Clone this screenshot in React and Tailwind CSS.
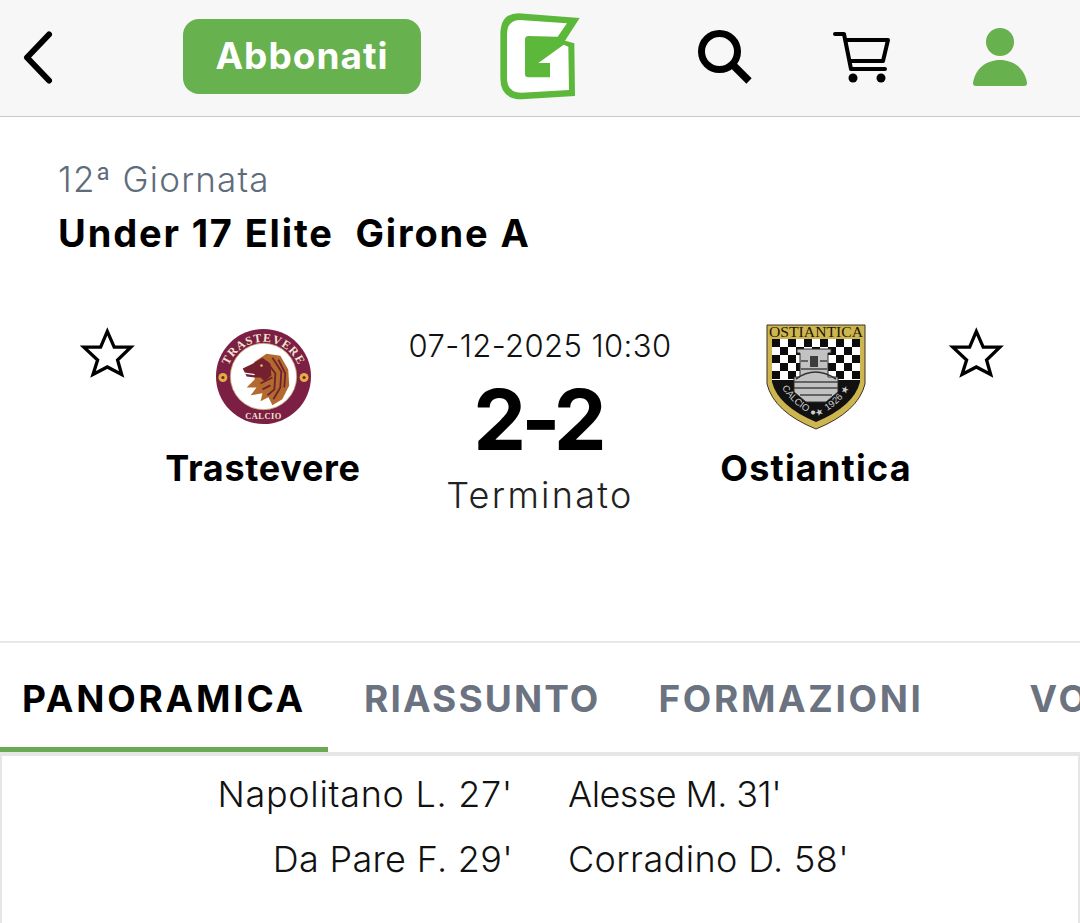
import React from 'react';

const BackIcon = () => (
  <svg width="34" height="56" viewBox="0 0 34 56" fill="none">
    <path d="M28 5.5 L6 28.5 L28 51.5" stroke="#000" strokeWidth="6" strokeLinecap="round" strokeLinejoin="round" />
  </svg>
);

const Logo = () => (
  <svg width="90" height="95" viewBox="0 0 270 285">
    <path d="M70 16 L254 30 L210 98 L238 106 L240 264 L80 274 Q16 274 16 210 L16 80 Q16 16 70 16 Z" fill="#5cb83a" />
    <path d="M74 36 L216 46 L188 86 L100 84 Q90 84 90 96 L90 198 Q90 208 100 208 L165 208 L165 165 L130 165 L206 110 L220 116 L222 246 L80 254 Q36 254 36 210 L36 80 Q36 36 74 36 Z" fill="#fff" />
  </svg>
);

const SearchIcon = () => (
  <svg width="56" height="56" viewBox="0 0 56 56" fill="none">
    <circle cx="22.5" cy="22.5" r="18" stroke="#000" strokeWidth="7" />
    <path d="M36 36 L52 52" stroke="#000" strokeWidth="7.5" />
  </svg>
);

const CartIcon = () => (
  <svg width="58" height="52" viewBox="0 0 58 52" fill="none">
    <path d="M2 2 H11 L18 37 H52" stroke="#000" strokeWidth="4" strokeLinecap="round" strokeLinejoin="round" />
    <path d="M12 8 H55 L50 29 H16" stroke="#000" strokeWidth="4" strokeLinejoin="round" />
    <circle cx="20" cy="46" r="4.5" fill="#000" />
    <circle cx="48" cy="46" r="4.5" fill="#000" />
  </svg>
);

const UserIcon = () => (
  <svg width="56" height="60" viewBox="0 0 56 60">
    <circle cx="28" cy="15" r="14" fill="#68b14f" />
    <path d="M1 56 C3 42 14 33 28 33 C42 33 53 42 55 56 Q55 59 52 59 H4 Q1 59 1 56 Z" fill="#68b14f" />
  </svg>
);

const StarIcon = () => (
  <svg width="65" height="65" viewBox="-3 -3 71 71" fill="none">
    <path d="M32.3 9.5 L39.8 26.7 L58 26.7 L43.5 40.7 L48 56.5 L32.3 48.3 L16.7 56.5 L21.7 40.7 L6.7 26.7 L25 26.7 Z" stroke="#000" strokeWidth="3.6" />
  </svg>
);

const TrastevereCrest = () => (
  <svg width="97" height="97" viewBox="0 0 98 98">
    <defs>
      <path id="topArc" d="M11 52 A38 38 0 0 1 87 52" />
    </defs>
    <circle cx="49" cy="49" r="48" fill="#7b1f45" />
    <circle cx="49" cy="49" r="33.5" fill="#fff" stroke="#c9a06a" strokeWidth="0.8" />
    <text fontFamily="Liberation Serif, serif" fontWeight="700" fontSize="12" fill="#f3e6cf" letterSpacing="0.9">
      <textPath href="#topArc" startOffset="50%" textAnchor="middle">TRASTEVERE</textPath>
    </text>
    <text fontFamily="Liberation Serif, serif" fontWeight="700" fontSize="8.5" fill="#f3e6cf" letterSpacing="0.5" x="49" y="92" textAnchor="middle">CALCIO</text>
    <circle cx="8" cy="50" r="4.5" fill="#e2ad42" />
    <circle cx="90" cy="50" r="4.5" fill="#e2ad42" />
    <circle cx="8" cy="50" r="1.6" fill="#6b2a2a" />
    <circle cx="90" cy="50" r="1.6" fill="#6b2a2a" />
    {/* lion head, mane first then face */}
    <path d="M40 34 L52 26 L66 28 L74 42 L75 58 L68 72 L58 78 L54 70 L46 74 L48 66 L36 68 L42 60 L32 60 L40 52 Z" fill="#b4692f" />
    <path d="M58 30 L67 44 L66 60 L59 72 M64 32 L71 46 L70 60 M52 34 L61 46 L60 62 L53 68 M48 62 L56 58 M46 56 L58 50" stroke="#6e2230" strokeWidth="1.8" fill="none" />
    <path d="M28 41 L38 36 L48 30 L56 36 L57 48 L50 54 L46 50 L40 50 L32 49 Z" fill="#74202f" />
    <path d="M26 45 L40 47" stroke="#fff" strokeWidth="1.3" />
    <circle cx="47" cy="38" r="1.3" fill="#e8b765" />
  </svg>
);

const checkers = [];
for (let r = 0; r < 5; r++) {
  for (let c = 0; c < 11; c++) {
    if ((r + c) % 2 === 0) checkers.push([c, r]);
  }
}

const OstianticaCrest = () => (
  <svg width="100" height="106" viewBox="0 0 100 106">
    <defs>
      <clipPath id="shieldClip">
        <path d="M6 15 H94 V58 Q88 82 50 98 Q12 82 6 58 Z" />
      </clipPath>
      <path id="ostArc" d="M9 48 Q18 78 50 93 Q82 78 91 48" />
    </defs>
    <path d="M1 1 H99 V60 Q92 88 50 105 Q8 88 1 60 Z" fill="#cdb54f" stroke="#3a3320" strokeWidth="1" />
    <path d="M6 15 H94 V58 Q88 82 50 98 Q12 82 6 58 Z" fill="#111" />
    <g clipPath="url(#shieldClip)">
      <rect x="6" y="15" width="88" height="41" fill="#fff" />
      {checkers.map(([c, r]) => (
        <rect key={`${c}-${r}`} x={6 + c * 8} y={15 + r * 8} width="8" height="8" fill="#0c0c0c" />
      ))}
    </g>
    {/* tower and walls */}
    <path d="M31 25 H65 V29 H62 V53 H72 V68 L60 78 H40 L28 68 V53 H34 V29 H31 Z" fill="#c2c2c2" stroke="#2c2c2c" strokeWidth="1" />
    <rect x="44" y="32" width="8" height="11" fill="#3d3d3d" />
    <path d="M35 37 H42 M54 37 H61 M35 45 H61 M28 58 H72 M28 64 H72 M34 71 H66" stroke="#444" strokeWidth="1.4" />
    <path d="M30 55 Q49 41 70 55" stroke="#333" strokeWidth="1.6" fill="none" />
    <text fontFamily="Liberation Serif, serif" fontSize="15" fill="#1a1608" x="50" y="13" textAnchor="middle" textLength="94" lengthAdjust="spacingAndGlyphs">OSTIANTICA</text>
    <text fontFamily="Liberation Sans, sans-serif" fontSize="9.5" fill="#cfcfcf">
      <textPath href="#ostArc" startOffset="50%" textAnchor="middle">CALCIO ● ★ 1926 ★</textPath>
    </text>
  </svg>
);

export default function App() {
  return (
    <div className="h-[923px] w-[1080px] overflow-hidden bg-white font-['Inter',sans-serif]">
      {/* Top bar */}
      <div className="flex h-[117px] items-center border-b border-[#c9c9c9] bg-[#f7f7f7]">
        <div className="ml-[21px] -mt-[3px] w-[34px]"><BackIcon /></div>
        <button className="ml-[128px] -mt-[4px] flex h-[75px] w-[238px] items-center justify-center rounded-[16px] bg-[#68b14f] text-[37px] font-bold tracking-[1px] text-white">
          Abbonati
        </button>
        <div className="ml-[74px] -mt-[5px]"><Logo /></div>
        <div className="ml-[112px] -mt-[2px]"><SearchIcon /></div>
        <div className="ml-[80px] -mt-[1px]"><CartIcon /></div>
        <div className="ml-[81px] -mt-[3px]"><UserIcon /></div>
      </div>

      {/* Competition */}
      <div className="pl-[58px] pt-[39px]">
        <div className="text-[35px] font-light leading-[46px] tracking-[1.2px] text-[#5f6c7b]">12ª Giornata</div>
        <div className="mt-[8px] whitespace-pre text-[38px] font-bold leading-[46px] tracking-[1.85px] text-black">Under 17 Elite  Girone A</div>
      </div>

      {/* Match */}
      <div className="mt-[64px] flex h-[323px] items-start border-b-2 border-[#e8e8e8]">
        <div className="ml-[75px] w-[88px]"><StarIcon /></div>
        <div className="flex w-[200px] flex-col items-center">
          <div className="mt-[8px]"><TrastevereCrest /></div>
          <div className="mt-[20px] text-[36px] font-bold leading-[46px] tracking-[0.7px] text-black">Trastevere</div>
        </div>
        <div className="ml-[47px] flex w-[260px] flex-col items-center">
          <div className="mt-[4px] whitespace-nowrap text-[31px] font-light leading-[44px] tracking-[0.4px] text-[#111111]">07-12-2025 10:30</div>
          <div className="mt-[9px] pr-[5px] text-[84px] font-bold leading-[86px] tracking-[-5px] text-black">2-2</div>
          <div className="mt-[9px] text-[36px] font-light leading-[46px] tracking-[2.3px] text-[#222222]">Terminato</div>
        </div>
        <div className="ml-[46px] flex w-[200px] flex-col items-center">
          <div className="mt-[4px]"><OstianticaCrest /></div>
          <div className="mt-[15px] text-[36px] font-bold leading-[46px] tracking-[1.2px] text-black">Ostiantica</div>
        </div>
        <div className="ml-[28px]"><StarIcon /></div>
      </div>

      {/* Tabs */}
      <div className="flex h-[113px] overflow-hidden border-b-4 border-[#e6e6e6] text-[37px] font-bold text-[#6b7280]">
        <div className="flex h-[109px] w-[328px] shrink-0 items-center border-b-[5px] border-[#6aaa55] pl-[22px] pt-[7px] tracking-[2.8px] text-black">PANORAMICA</div>
        <div className="ml-[36px] flex h-[109px] shrink-0 items-center whitespace-nowrap pt-[2px] tracking-[2.1px]">RIASSUNTO</div>
        <div className="ml-[58px] flex h-[109px] shrink-0 items-center whitespace-nowrap pt-[2px] tracking-[2.65px]">FORMAZIONI</div>
        <div className="ml-[106px] flex h-[109px] shrink-0 items-center whitespace-nowrap pt-[2px] tracking-[2.65px]">VOTI</div>
      </div>

      {/* Scorers */}
      <div className="h-[170px] border-x-2 border-[#e6e6e6] pt-[5px] text-[36px] font-light text-[#111111]">
        <div className="flex h-[65px] items-center">
          <div className="w-[511px] text-right tracking-[0.7px]">Napolitano L. 27'</div>
          <div className="ml-[55px] tracking-[-0.6px]">Alesse M. 31'</div>
        </div>
        <div className="flex h-[65px] items-center">
          <div className="w-[511px] text-right tracking-[0.3px]">Da Pare F. 29'</div>
          <div className="ml-[55px] tracking-[0.4px]">Corradino D. 58'</div>
        </div>
      </div>
    </div>
  );
}
